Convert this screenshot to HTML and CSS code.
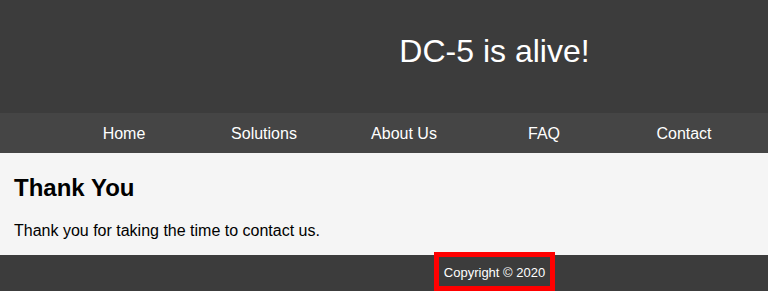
FILE: index.html
```html
<!DOCTYPE html>
<html>
    <head>
        <title>DC-5 is alive!</title>
        <meta charset="utf-8"/>
        <link rel="stylesheet" href="styles.css">
    </head>
    <body>
        <div class="header">
            <h1>DC-5 is alive!</h1>
        </div>
        <ul class="menu">
            <li><a href="#">Home</a></li>
            <li><a href="#">Solutions</a></li>
            <li><a href="#">About Us</a></li>
            <li><a href="#">FAQ</a></li>
            <li><a href="#">Contact</a></li>
        </ul>
        <div class="body-content">
            <h2>Thank You</h2>
            <p>Thank you for taking the time to contact us.</p>
        </div>
        <div class="footer">
            <span class="footer-wrapper">Copyright &copy; 2020</span>
        </div>
    </body>
</html>
```

FILE: styles.css
```css
*{
    margin: 0;
    padding: 0;
}
ul,li{
    list-style-type: none;
}
body{
    font-family: "Liberation Sans", Arial, sans-serif;
    background-color: #3c3c3c;
    overflow: hidden;
}
.header{
    height: 113px;
    padding-left: 221px;
    display: flex;
    align-items: center;
    justify-content: center;
    background-color: #3c3c3c;
}
.header h1{
    font-size: 32px;
    font-weight: normal;
    color: #fff;
    margin-top: -10px;
}
.menu{
    height: 40px;
    display: flex;
    justify-content: flex-end;
    padding-right: 14px;
    background-color: #454545;
}
.menu li{
    width: 140px;
    padding-top: 2px;
    display: flex;
    align-items: center;
    justify-content: center;
}
.menu li a{
    color: #fff;
    text-decoration: none;
    font-size: 16px;
}
.body-content{
    display: flow-root;
    padding: 1px 14px 0;
    background-color: #f5f5f5;
    color: #000;
}
.body-content h2{
    font-size: 24px;
    margin: 20px 0;
}
.body-content p{
    font-size: 16px;
    margin: 16px 0 15px;
}
.footer{
    height: 36px;
    padding-left: 221px;
    text-align: center;
    background-color: #3c3c3c;
}
.footer-wrapper{
    display: inline-block;
    margin-top: -3px;
    padding: 8px 5px 5px;
    line-height: 16px;
    font-size: 13px;
    color: #fff;
    border: 5px solid #f00;
}
```
